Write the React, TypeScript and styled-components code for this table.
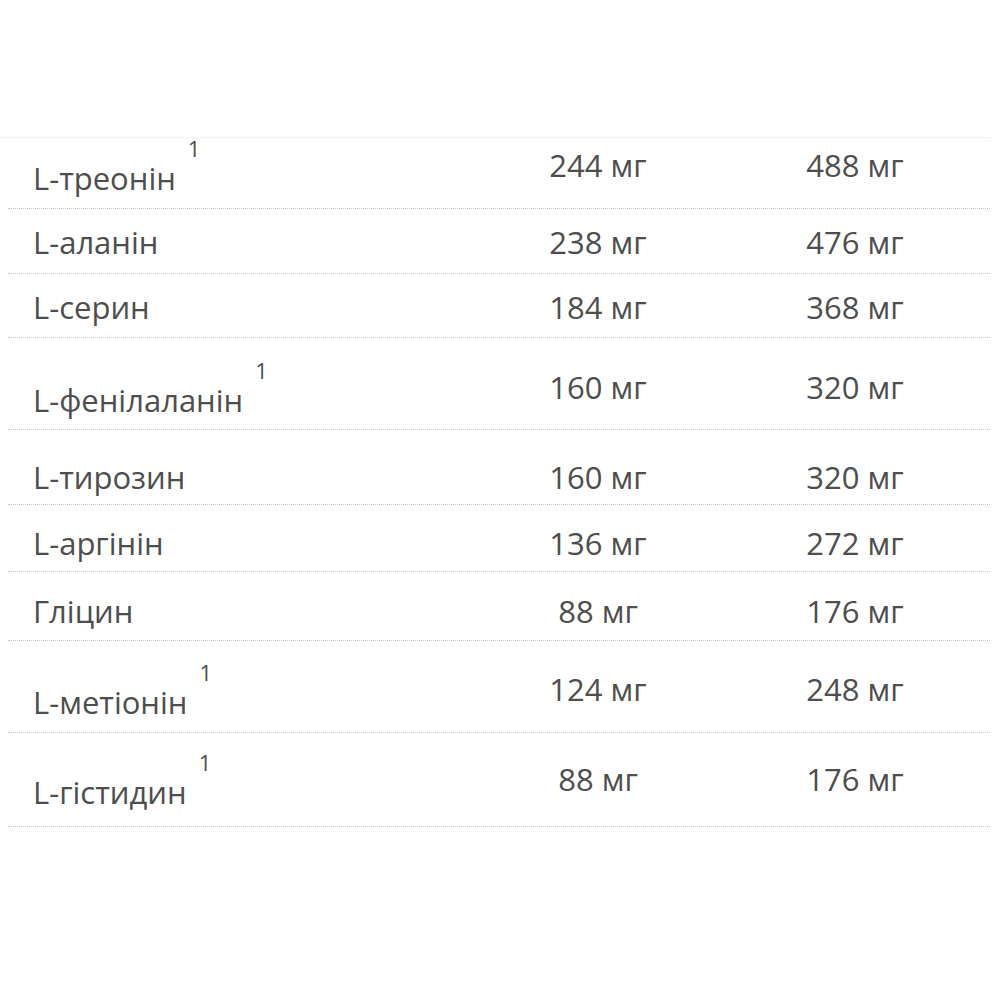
import React from "react";
import styled, { createGlobalStyle } from "styled-components";

const Global = createGlobalStyle`
  html, body {
    margin: 0;
    padding: 0;
    background: #ffffff;
  }
  body {
    font-family: "Open Sans", "Noto Sans", "Liberation Sans", sans-serif;
    color: #4e4e4e;
  }
`;

const Page = styled.div`
  width: 1000px;
  height: 1000px;
  padding-top: 137px;
  box-sizing: border-box;
`;

const Table = styled.div`
  width: 990px;
  border-top: 1px solid #f2f2f2;
`;

const Row = styled.div<{ $h: number; $pt: number }>`
  display: grid;
  grid-template-columns: 460px 260px 254px;
  align-items: start;
  box-sizing: border-box;
  height: ${(p) => p.$h}px;
  padding-top: ${(p) => p.$pt}px;
  margin-left: 8px;
  width: 982px;
  border-bottom: 1px dotted #c4c4c4;
`;

const NameCell = styled.div`
  display: flex;
  align-items: flex-start;
  padding-left: 25px;
`;

const NameText = styled.span<{ $sup: boolean }>`
  font-size: 31px;
  line-height: 40px;
  margin-top: ${(p) => (p.$sup ? 13 : 0)}px;
  white-space: nowrap;
`;

const Sup = styled.sup`
  font-size: 22px;
  line-height: 22px;
  vertical-align: baseline;
  margin-left: 12px;
  margin-top: -8px;
  color: #4e4e4e;
`;

const Value = styled.div`
  font-size: 31px;
  line-height: 40px;
  text-align: center;
  white-space: nowrap;
`;

type Item = {
  name: string;
  sup?: boolean;
  a: string;
  b: string;
  h: number;
  pt: number;
};

const items: Item[] = [
  { name: "L-треонін", sup: true, a: "244 мг", b: "488 мг", h: 71, pt: 7 },
  { name: "L-аланін", a: "238 мг", b: "476 мг", h: 65, pt: 13 },
  { name: "L-серин", a: "184 мг", b: "368 мг", h: 64, pt: 13 },
  { name: "L-фенілаланін", sup: true, a: "160 мг", b: "320 мг", h: 92, pt: 29 },
  { name: "L-тирозин", a: "160 мг", b: "320 мг", h: 75, pt: 27 },
  { name: "L-аргінін", a: "136 мг", b: "272 мг", h: 67, pt: 18 },
  { name: "Гліцин", a: "88 мг", b: "176 мг", h: 69, pt: 19 },
  { name: "L-метіонін", sup: true, a: "124 мг", b: "248 мг", h: 92, pt: 28 },
  { name: "L-гістидин", sup: true, a: "88 мг", b: "176 мг", h: 94, pt: 26 },
];

export default function App() {
  return (
    <>
      <Global />
      <Page>
        <Table>
          {items.map((it) => (
            <Row key={it.name} $h={it.h} $pt={it.pt}>
              <NameCell>
                <NameText $sup={!!it.sup}>{it.name}</NameText>
                {it.sup && <Sup>1</Sup>}
              </NameCell>
              <Value>{it.a}</Value>
              <Value>{it.b}</Value>
            </Row>
          ))}
        </Table>
      </Page>
    </>
  );
}
